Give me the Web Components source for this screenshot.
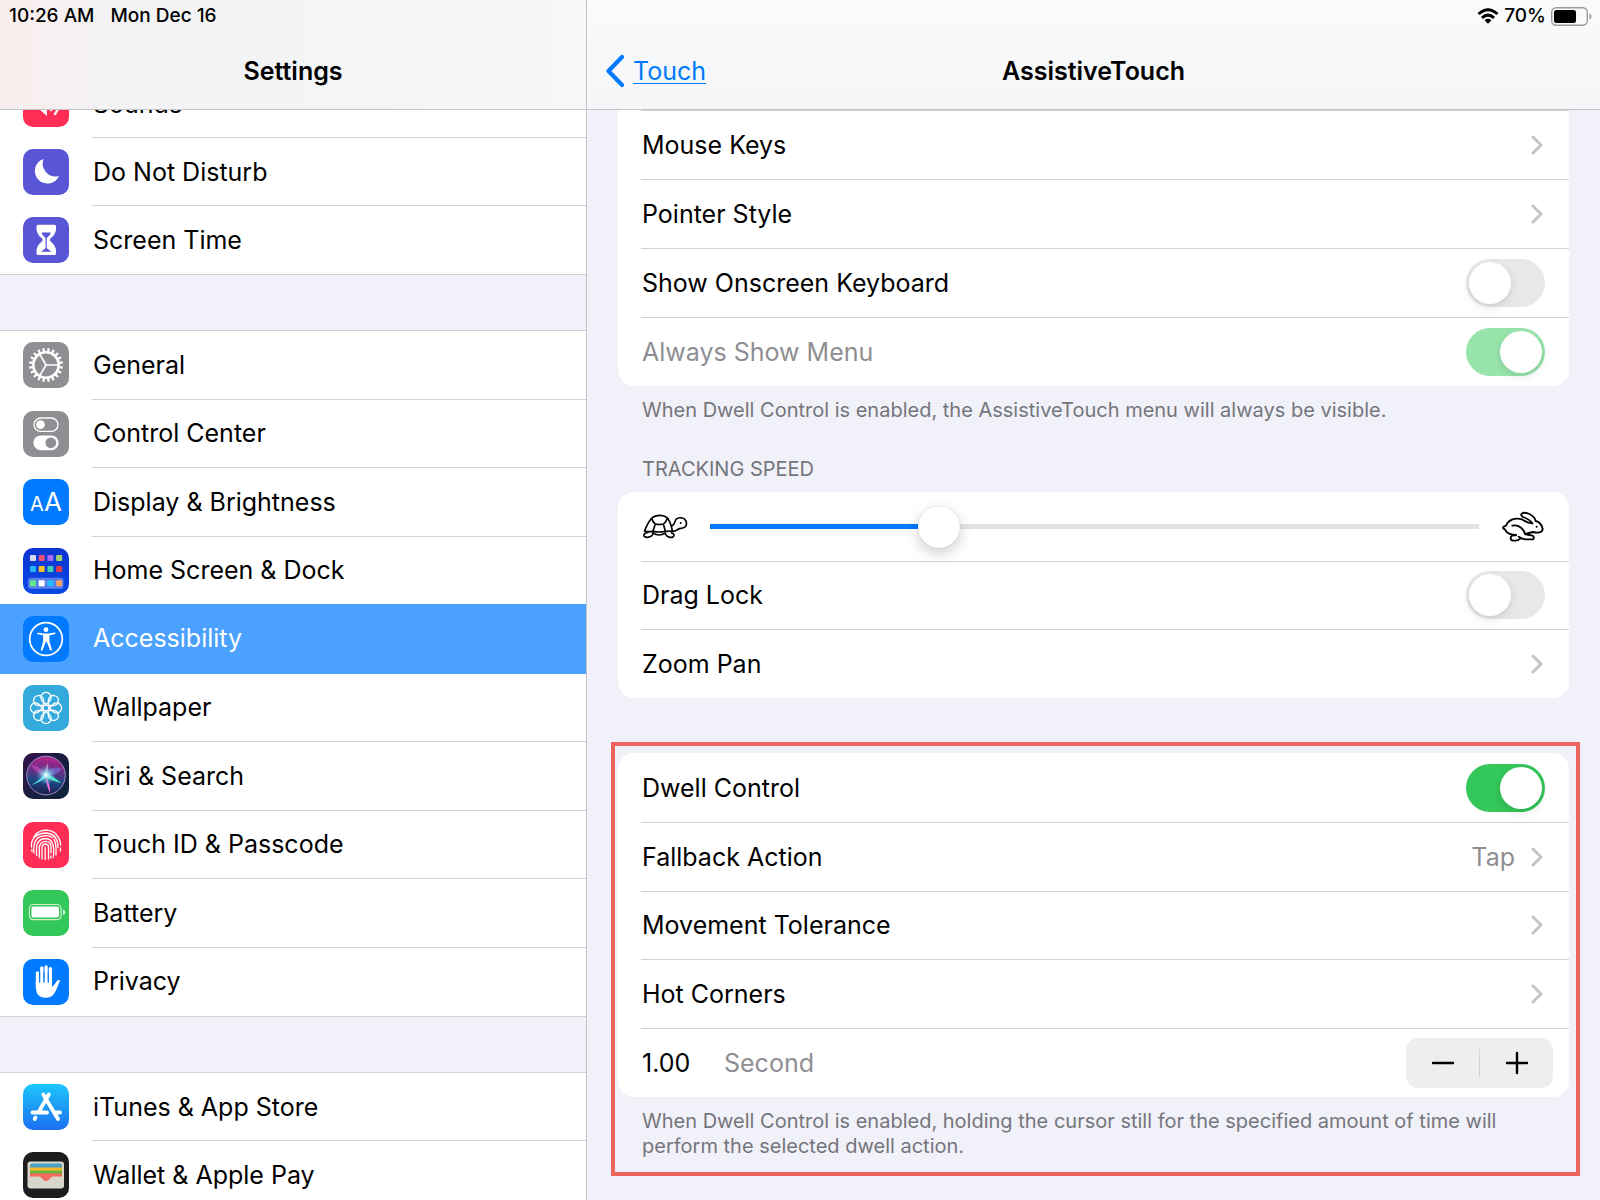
<!DOCTYPE html>
<html lang="en">
<head>
<meta charset="utf-8">
<meta name="viewport" content="width=device-width, initial-scale=1">
<title>Settings</title>
<style>
  :root {
    --line: #d1d1d5;
    --group-bg: #f1f1f9;
    --blue: #007aff;
    --gray: #8e8e93;
  }
  body {
    margin: 0;
    font-family: Inter, "Liberation Sans", sans-serif;
    font-size: 25px;
    line-height: 32px;
    color: #000;
  }
</style>
</head>
<body>
<split-view>
  <settings-pane slot="sidebar" side>
    <status-clock slot="status"></status-clock>
    <span slot="title">Settings</span>
    <side-group scrolled style="--group-height: 206px">
      <side-item icon="sounds">Sounds</side-item>
      <side-item icon="moon">Do Not Disturb</side-item>
      <side-item icon="hourglass">Screen Time</side-item>
    </side-group>
    <side-group style="--group-height: 687px">
      <side-item icon="gear">General</side-item>
      <side-item icon="controls">Control Center</side-item>
      <side-item icon="display">Display &amp; Brightness</side-item>
      <side-item icon="home">Home Screen &amp; Dock</side-item>
      <side-item icon="accessibility" selected>Accessibility</side-item>
      <side-item icon="wallpaper">Wallpaper</side-item>
      <side-item icon="siri">Siri &amp; Search</side-item>
      <side-item icon="touchid">Touch ID &amp; Passcode</side-item>
      <side-item icon="battery">Battery</side-item>
      <side-item icon="hand">Privacy</side-item>
    </side-group>
    <side-group style="--group-height: 138px">
      <side-item icon="appstore">iTunes &amp; App Store</side-item>
      <side-item icon="wallet">Wallet &amp; Apple Pay</side-item>
    </side-group>
  </settings-pane>

  <settings-pane>
    <status-power slot="status"></status-power>
    <back-link slot="back">Touch</back-link>
    <span slot="title">AssistiveTouch</span>
    <card-group continued style="--group-height: 276px">
      <link-row>Mouse Keys</link-row>
      <link-row>Pointer Style</link-row>
      <switch-row label="Show Onscreen Keyboard"></switch-row>
      <switch-row label="Always Show Menu" checked disabled></switch-row>
      <span slot="footer">When Dwell Control is enabled, the AssistiveTouch menu will always be visible.</span>
    </card-group>
    <card-group header="Tracking Speed" style="--group-height: 206px">
      <speed-row value="286"></speed-row>
      <switch-row label="Drag Lock"></switch-row>
      <link-row>Zoom Pan</link-row>
    </card-group>
    <marked-area>
      <card-group style="--group-height: 344px">
        <switch-row label="Dwell Control" checked></switch-row>
        <link-row value="Tap">Fallback Action</link-row>
        <link-row>Movement Tolerance</link-row>
        <link-row>Hot Corners</link-row>
        <stepper-row value="1.00" unit="Second"></stepper-row>
        <span slot="footer">When Dwell Control is enabled, holding the cursor still for the specified amount of time will perform the selected dwell action.</span>
      </card-group>
    </marked-area>
  </settings-pane>
</split-view>

<script>
const range = n => [...Array(n).keys()];

const squares = (y, colors) => colors.map((c, i) =>
  `<rect x="${7 + i * 8.7}" y="${y}" width="6" height="6" rx="1" fill="${c}"/>`).join('');

// Sidebar icons, each drawn on a 46 x 46 tile
const icons = {
  sounds: { bg: '#ff2d55', art: `
    <path d="M10 18h6l8-7v24l-8-7h-6z" fill="#fff"/>
    <path d="M28 17q4 6 0 12M32 13q7 10 0 20" fill="none" stroke="#fff" stroke-width="2.4" stroke-linecap="round"/>` },
  moon: { bg: '#5856d6', art: `
    <path d="M20.5 10A12.6 12.6 0 1 0 36 27A13 13 0 0 1 20.5 10Z" fill="#fff"/>` },
  hourglass: { bg: '#5856d6', art: `
    <path d="M15 7.7h16.500q1.500 0 1.500 1.600v3q0 1.600-1 3.700q-1.300 3-3.500 4.600q-1.700 1.300-1.700 2.300t1.700 2.300q2.200 1.600 3.500 4.600q1 2.100 1 3.700v2.900q0 1.600-1.500 1.600h-16.500q-1.500 0-1.500-1.600v-2.900q0-1.600 1-3.700q1.300-3 3.500-4.600q1.700-1.300 1.700-2.300t-1.700-2.300q-2.200-1.600-3.500-4.600q-1-2.100-1-3.700v-3q0-1.600 1.500-1.600z" fill="#fff"/>
    <path d="M18.600 15.400h9.200q-.8 3.200-3 4.700q-1 .7-1 1.700v9q0 .8 1.300 1.400q2.300 1 3.200 2.500h-10.200q.9-1.500 3.200-2.500q1.300-.6 1.300-1.400v-9q0-1-1-1.700q-2.200-1.500-3-4.700z" fill="#5856d6"/>` },
  gear: { bg: '#8e8e93', art: `
    <g fill="none" stroke="#fff">
      <circle cx="23" cy="23" r="12.700" stroke-width="2.600"/>
      <g stroke-width="2.200">${range(20).map(i => `<path d="M23 9.500V6" transform="rotate(${i * 18 + 9} 23 23)"/>`).join('')}</g>
      <path d="M23 23h12M23 23l-6-10.400M23 23l-6 10.400" stroke-width="1.700"/>
    </g>` },
  controls: { bg: '#8e8e93', art: `
    <rect x="11" y="7" width="24" height="13.400" rx="6.700" fill="none" stroke="#fff" stroke-width="1.300"/>
    <circle cx="17.500" cy="13.700" r="4.400" fill="#fff"/>
    <rect x="10.400" y="24.400" width="25.200" height="14.800" rx="7.400" fill="#fff"/>
    <circle cx="27.800" cy="31.800" r="5.400" fill="#8e8e93"/>` },
  display: { bg: '#007aff', art: `
    <g fill="#fff" font-family="Inter, sans-serif"><text x="7" y="32" font-size="20">A</text><text x="21" y="32" font-size="26">A</text></g>` },
  home: { bg: 'linear-gradient(#0b35cf, #0a48e4)', art: `
    ${squares(7, ['#d5dbf5', '#f0507a', '#a86cf5', '#9fd468'])}
    ${squares(18, ['#22b6f8', '#f5c02c', '#42cfae', '#e23c4c'])}
    <rect x="5" y="29.700" width="35.500" height="11" rx="2.500" fill="#fff" opacity=".32"/>
    ${squares(32.3, ['#5ee887', '#fff', '#22bdfa', '#f2a15f'])}` },
  accessibility: { bg: '#007aff', art: `
    <circle cx="23" cy="23" r="16.300" fill="none" stroke="#fff" stroke-width="1.800"/>
    <circle cx="23" cy="13.700" r="2.400" fill="#fff"/>
    <path d="M14.500 16.500l5.500 1h6l5.500-1q1 0 1 .8t-.8.900l-5.200 1.100v6l2.300 8.200q.2 1-.6 1.200t-1.200-.7l-3.200-8h-1l-3.200 8q-.4.900-1.200.7t-.6-1.200l2.300-8.200v-6l-5.200-1.100q-.8-.1-.8-.9t.9-.8z" fill="#fff"/>` },
  wallpaper: { bg: '#34aadc', art: `
    <g fill="none" stroke="#fff" stroke-width="1.400">
      ${range(8).map(i => `<path d="M23 19.500L19 15.500A5 5 0 1 1 27 15.500Z" transform="rotate(${i * 45} 23 23)"/>`).join('')}
      <circle cx="23" cy="23" r="3"/>
    </g>` },
  siri: { bg: 'linear-gradient(135deg, #35104c, #14203e 60%, #10243e)', art: `
    <defs>
      <linearGradient id="orb" x1=".5" y1="0" x2=".4" y2="1"><stop offset="0" stop-color="#b5258c"/><stop offset=".35" stop-color="#6d2b84"/><stop offset=".65" stop-color="#1c4a83"/><stop offset="1" stop-color="#1d1848"/></linearGradient>
      <radialGradient id="glow"><stop offset="0" stop-color="#fff"/><stop offset=".35" stop-color="#9de9fa" stop-opacity=".7"/><stop offset="1" stop-color="#45a5dc" stop-opacity="0"/></radialGradient>
    </defs>
    <circle cx="23" cy="22.500" r="19.300" fill="url(#orb)" stroke="#9e8cc0" stroke-width="1"/>
    <path d="M22 23Q12 20 8 12Q18 12 22 23Z" fill="#d44ec0" opacity=".6"/>
    <path d="M22 23Q28 11 39 16Q34 23 22 23Z" fill="#7979d8" opacity=".6"/>
    <path d="M22 22Q23 13 25 10Q25 18 24 23Z" fill="#f3abd8" opacity=".8"/>
    <path d="M23 20Q15 29 8 32Q16 30 23 24Z" fill="#55f0e4"/>
    <path d="M23 20Q33 25 38 30Q30 28 21 24Z" fill="#4ce5c9"/>
    <path d="M22 23Q28 31 27 40Q24 34 22 23Z" fill="#f16bd2"/>
    <circle cx="23" cy="22" r="10" fill="url(#glow)"/>` },
  touchid: { bg: '#ff2d55', art: `
    <g fill="none" stroke="#fff" stroke-width="1.300" stroke-linecap="round">
      <path d="M13 11.500Q23 4.500 33 11.500M10.500 15.500Q12 13 14 11.900M32.500 12Q37.500 16.500 37.600 23"/>
      <path d="M8.500 25Q8 21.500 9.500 18Q13.500 11 23 11Q35 12 35 25.500M8.800 27.500L9 29.500M37.500 26L37.300 29"/>
      <path d="M11 31Q10.500 28 10.900 25Q11.500 13.800 23 13.700Q27 13.700 29.500 15.800M31 17.500Q33.500 21 33 33"/>
      <path d="M13.700 33.500Q13.300 28 13.600 25Q14.500 16.500 23 16.500Q32 17.500 30.500 33.500M30.300 35V35.500"/>
      <path d="M16.300 35.500V25.500Q17 19.300 23 19.300Q28.500 20 28 25.500V31M27.900 34V36"/>
      <path d="M19 37V26Q19 22 22.500 22Q25.800 22.300 25.500 26V37M22.200 25V37.500"/>
    </g>` },
  battery: { bg: '#34c759', art: `
    <g opacity=".75"><rect x="6.400" y="14.500" width="31.700" height="15.200" rx="4" fill="none" stroke="#fff" stroke-width="1.200"/>
    <path d="M40 19.500q2.300.6 2.300 2.800t-2.300 2.800z" fill="#fff"/></g>
    <rect x="8.500" y="16.600" width="27.500" height="11" rx="2" fill="#fff"/>` },
  hand: { bg: '#007aff', art: `
    <path d="M14.500 28V13.800M18.800 25V8.900M23.100 25V8M27.400 25V9.600" stroke="#fff" stroke-width="3.300" stroke-linecap="round"/>
    <path d="M12.850 22.500H29V28Q32 25.500 33.500 22.500Q35 20.300 37.300 21.200Q36.500 22.500 34 29Q31.500 35 29 37Q26.500 39 22 38.700Q13 38.500 12.850 28.500Z" fill="#fff"/>
    <path d="M16.650 13V23.500M20.950 13V23.500M25.250 13V23.500" stroke="#007aff" stroke-width="1" stroke-linecap="round"/>` },
  appstore: { bg: 'linear-gradient(#1dc6fb, #1d70f2)', art: `
    <g stroke="#fff" stroke-width="3.800" stroke-linecap="round">
      <path d="M9.500 28.500H24M32 28.500H37M25.800 10.500L16 27.500M20.300 10.500L35 35M12.500 33.600L11.700 35"/>
    </g>` },
  wallet: { bg: '#1d1d1f', art: `
    <rect x="4.500" y="9.500" width="36.500" height="27" rx="3" fill="#d8d6cb"/>
    <path d="M7 17V13.500Q7 11.500 9 11.500H37Q39 11.500 39 13.500V17Z" fill="#4a9fc4"/>
    <path d="M7 15.500H39V20H7Z" fill="#f5b921"/>
    <path d="M7 18.500H39V23H7Z" fill="#6db33f"/>
    <path d="M7 21.500H39V24.500H30Q28 24.500 26.500 27Q25 29 23 29T19.500 27Q18 24.500 16 24.500H7Z" fill="#f2695c"/>` },
};

const chevron = `
  <svg class="chevron" width="12" height="20" viewBox="0 0 12 20" aria-hidden="true">
    <path d="M2 2l8 8-8 8" fill="none" stroke="#c4c4c7" stroke-width="3" stroke-linecap="round" stroke-linejoin="round"/>
  </svg>`;

// Box shared by every row of a card
const rowStyles = `
  :host { display: flex; padding-left: 23px; }
  .row {
    flex: 1;
    display: flex;
    align-items: center;
    box-sizing: border-box;
    min-width: 0;
    padding-left: 1px;
    padding-right: 24px;
    border-top: 1px solid var(--line);
    color: inherit;
    text-decoration: none;
  }
  :host(:first-child) .row { border-top-color: var(--first-line, transparent); }
  .label { flex: 1; }
`;

function define(name, render, setup) {
  customElements.define(name, class extends HTMLElement {
    constructor() {
      super();
      this.attachShadow({ mode: 'open' });
    }
    connectedCallback() {
      this.shadowRoot.innerHTML = render(this);
      if (setup) setup(this.shadowRoot, this);
    }
  });
}

define('split-view', () => `
  <style>
    :host {
      display: grid;
      grid-template-columns: minmax(0, 586fr) minmax(0, 1014fr);
      height: 100vh;
      overflow: hidden;
    }
  </style>
  <slot name="sidebar"></slot>
  <slot></slot>
`);

define('settings-pane', () => `
  <style>
    :host {
      display: flex;
      flex-direction: column;
      min-height: 0;
      background: var(--group-bg);
      border-left: 1px solid #c3c3c8;
    }
    :host([side]) { border-left: none; }
    header {
      flex: none;
      display: flex;
      flex-direction: column;
      background: linear-gradient(#f9fafc, #f5f6f8);
      border-bottom: 1px solid #c3c3c8;
    }
    :host([side]) header {
      background: linear-gradient(90deg, #faeded, #f6f0f1 10%, #f3f3f5 22%, #f3f4f6 50%, #f6f7f9);
    }
    .status { height: 32px; display: flex; }
    nav {
      display: grid;
      grid-template-columns: 1fr auto 1fr;
      align-items: center;
      height: 77px;
      padding: 0 19px;
    }
    h1 { margin: 0; grid-column: 2; font-size: 25px; line-height: 32px; font-weight: 600; }
    main {
      flex: 1;
      display: flex;
      flex-direction: column;
      min-height: 0;
      overflow: hidden;
      padding: 0 31px;
    }
    :host([side]) main { padding: 0; gap: 55px; }
  </style>
  <header>
    <div class="status"><slot name="status"></slot></div>
    <nav><slot name="back"></slot><h1><slot name="title"></slot></h1></nav>
  </header>
  <main><slot></slot></main>
`);

define('status-clock', () => `
  <style>
    :host { display: flex; align-items: center; gap: 16px; padding-left: 9px; font-size: 19px; font-weight: 500; line-height: 24px; }
  </style>
  <span>10:26 AM</span><span>Mon Dec 16</span>
`);

define('status-power', () => `
  <style>
    :host { flex: 1; display: flex; align-items: center; justify-content: flex-end; gap: 5px; padding-right: 8px; font-size: 19px; font-weight: 500; line-height: 24px; }
    svg { display: block; }
  </style>
  <svg width="22" height="16" viewBox="0 0 22 16" aria-label="Wi-Fi">
    <g fill="none" stroke="#000" stroke-width="3">
      <path d="M1.500 6Q11-2.500 20.500 6"/>
      <path d="M5 9.800Q11 4.500 17 9.800"/>
    </g>
    <path d="M7.500 12.200Q11 9.300 14.500 12.200L11 15.800Z"/>
  </svg>
  <span>70%</span>
  <svg width="41" height="19" viewBox="0 0 41 19" aria-label="Battery">
    <rect x=".7" y=".7" width="35.600" height="17.600" rx="4.500" fill="none" stroke="#9b9c9e" stroke-width="1.400"/>
    <rect x="3" y="3" width="22" height="13" rx="2.500"/>
    <path d="M38.500 6.500q2 .7 2 3t-2 3z" fill="#9b9c9e"/>
  </svg>
`);

define('back-link', () => `
  <style>
    :host { display: flex; }
    a { display: flex; align-items: center; gap: 9px; color: var(--blue); text-decoration: none; }
    span { text-decoration: underline; text-decoration-thickness: 1px; text-underline-offset: 3px; }
  </style>
  <a href="#touch">
    <svg width="18" height="34" viewBox="0 0 18 34" aria-hidden="true">
      <path d="M16 3L2.500 17L16 31" fill="none" stroke="currentColor" stroke-width="4.200" stroke-linecap="round" stroke-linejoin="round"/>
    </svg>
    <span><slot></slot></span>
  </a>
`);

define('side-group', () => `
  <style>
    :host {
      flex: none;
      display: grid;
      grid-auto-rows: 1fr;
      box-sizing: border-box;
      min-height: var(--group-height);
      background: #fff;
      border-top: 1px solid var(--line);
      border-bottom: 1px solid var(--line);
    }
    /* the list is scrolled, its first row lies partly under the header */
    :host([scrolled]) { margin-top: -41px; }
  </style>
  <slot></slot>
`);

define('side-item', el => `
  <style>
    :host { display: flex; }
    /* covers the separator of the row above */
    :host([selected]) { margin-top: -1px; }
    a {
      flex: 1;
      display: flex;
      align-items: center;
      padding-left: 23px;
      gap: 23px;
      color: inherit;
      text-decoration: none;
    }
    :host([selected]) a { background: #4aa1ff; color: #fff; }
    .tile { flex: none; width: 46px; height: 46px; border-radius: 10px; background: ${icons[el.getAttribute('icon')].bg}; }
    svg { display: block; }
    .label {
      flex: 1;
      display: flex;
      align-items: center;
      align-self: stretch;
      padding-left: 1px;
      border-bottom: 1px solid var(--line);
    }
    :host(:last-child) .label, :host([selected]) .label { border-bottom-color: transparent; }
  </style>
  <a href="#${el.getAttribute('icon')}">
    <span class="tile"><svg width="46" height="46" viewBox="0 0 46 46" aria-hidden="true">${icons[el.getAttribute('icon')].art}</svg></span>
    <span class="label"><slot></slot></span>
  </a>
`);

define('card-group', el => `
  <style>
    :host { display: block; }
    .card {
      display: grid;
      grid-auto-rows: 1fr;
      min-height: var(--group-height);
      background: #fff;
      border-radius: 16px;
    }
    :host([continued]) { --first-line: var(--line); }
    :host([continued]) .card { border-radius: 0 0 16px 16px; }
    .note {
      padding: 0 24px;
      font-size: 20px;
      line-height: 25px;
      color: #75757c;
    }
    .header { padding-top: 34px; padding-bottom: 10px; text-transform: uppercase; }
    .footer { padding-top: 12px; }
  </style>
  ${el.hasAttribute('header') ? `<div class="note header">${el.getAttribute('header')}</div>` : ''}
  <div class="card"><slot></slot></div>
  ${el.querySelector('[slot=footer]') ? '<div class="note footer"><slot name="footer"></slot></div>' : ''}
`);

define('link-row', el => `
  <style>
    ${rowStyles}
    .row { padding-right: 26px; gap: 16px; }
    .value { color: var(--gray); }
  </style>
  <a class="row" href="#">
    <span class="label"><slot></slot></span>
    ${el.hasAttribute('value') ? `<span class="value">${el.getAttribute('value')}</span>` : ''}
    ${chevron}
  </a>
`);

define('switch-row', el => `
  <style>
    ${rowStyles}
    input {
      appearance: none;
      flex: none;
      display: flex;
      box-sizing: border-box;
      width: 79px;
      height: 48px;
      margin: 0;
      padding: 3px;
      border-radius: 24px;
      background: #e7e8ea;
    }
    input::before {
      content: "";
      width: 42px;
      height: 42px;
      border-radius: 50%;
      background: #fff;
      box-shadow: 0 3px 8px rgba(0, 0, 0, .12);
    }
    input:checked { background: #34c759; justify-content: flex-end; }
    input:disabled { background: #98e5ab; }
    :host([disabled]) .label { color: var(--gray); }
  </style>
  <div class="row">
    <label class="label" for="switch">${el.getAttribute('label')}</label>
    <input id="switch" type="checkbox" role="switch" ${el.hasAttribute('checked') ? 'checked' : ''} ${el.hasAttribute('disabled') ? 'disabled' : ''}>
  </div>
`);

define('speed-row', el => `
  <style>
    ${rowStyles}
    .row { gap: 22px; }
    svg { flex: none; }
    input {
      --thumb: 42px;
      appearance: none;
      flex: 1;
      min-width: 0;
      height: 42px;
      margin: 0;
      background: linear-gradient(90deg, var(--blue) var(--fill), #e4e4e6 var(--fill)) center / 100% 5px no-repeat;
    }
    input::-webkit-slider-thumb {
      appearance: none;
      width: var(--thumb);
      height: var(--thumb);
      border-radius: 50%;
      background: #fff;
      box-shadow: 0 0 1px rgba(0, 0, 0, .2), 0 5px 14px rgba(0, 0, 0, .2);
    }
  </style>
  <div class="row">
    <svg width="46" height="27" viewBox="98 100 138 81" aria-hidden="true">
      <g fill="none" stroke="#000" stroke-width="5" stroke-linecap="round" stroke-linejoin="round">
        <path d="M106 153C112 140 118 122 130 113C143 105 162 105 173 114C181 122 186 138 189 153"/>
        <path d="M127 117Q132 130 138 133Q150 136 162 133Q168 130 174 117M138 133L131 154M162 133L168 154"/>
        <path d="M106 154Q118 157 131 155Q150 159 168 155L190 154M131 161Q149 171 168 161"/>
        <path d="M130 161Q132 170 114 173Q102 173 104 165Q106 159 116 158M168 161Q170 170 182 173Q194 174 194 166Q193 161 186 159"/>
        <path d="M187 139Q195 135 197 126C200 111 222 111 229 122C235 135 229 146 215 146C205 146 203 155 190 155"/>
      </g>
      <circle cx="214" cy="130" r="3"/>
    </svg>
    <input type="range" min="0" max="1000" value="${el.getAttribute('value')}" aria-label="Tracking speed">
    <svg width="44" height="32" viewBox="362 94 132 96" aria-hidden="true">
      <g fill="none" stroke="#000" stroke-width="5.500" stroke-linecap="round" stroke-linejoin="round">
        <path d="M456 131Q440 130 425 119C402 113 384 121 377 138Q366 142 369 146Q376 149 377 155Q385 164 407 166"/>
        <path d="M456 131Q450 120 428 112Q420 107 424 102C436 94 463 107 466 124Q482 127 487 147C487 161 470 160 458 157Q450 159 436 163"/>
        <path d="M396 138C416 133 431 150 434 163Q447 166 457 168Q464 173 458 179H434Q423 177 415 171"/>
        <path d="M407 167Q391 165 391 176Q392 184 405 183Q415 182 420 177"/>
      </g>
      <circle cx="469" cy="141" r="3"/>
    </svg>
  </div>
`, root => {
  const input = root.querySelector('input');
  const update = () => input.style.setProperty('--fill', `${input.value / 10}%`);
  input.addEventListener('input', update);
  update();
});

define('stepper-row', el => `
  <style>
    ${rowStyles}
    .row { padding-right: 16px; }
    input {
      width: 82px;
      box-sizing: border-box;
      padding: 0;
      border: none;
      background: none;
      font: inherit;
      color: inherit;
    }
    .label { color: var(--gray); }
    .stepper {
      display: flex;
      align-items: center;
      height: 50px;
      border-radius: 12px;
      background: #edeef0;
    }
    button {
      display: grid;
      place-items: center;
      width: 73px;
      height: 50px;
      padding: 0;
      border: none;
      background: none;
      color: inherit;
    }
    .divider { width: 1px; height: 28px; background: #d3d4d8; }
  </style>
  <div class="row">
    <input id="amount" type="text" inputmode="decimal" value="${el.getAttribute('value')}">
    <label class="label" for="amount">${el.getAttribute('unit')}</label>
    <div class="stepper">
      <button type="button" data-step="-0.05" aria-label="Decrease">
        <svg width="24" height="24" viewBox="0 0 24 24"><path d="M2 12h20" stroke="currentColor" stroke-width="2.400" stroke-linecap="round"/></svg>
      </button>
      <span class="divider"></span>
      <button type="button" data-step="0.05" aria-label="Increase">
        <svg width="24" height="24" viewBox="0 0 24 24"><path d="M2 12h20M12 2v20" stroke="currentColor" stroke-width="2.400" stroke-linecap="round"/></svg>
      </button>
    </div>
  </div>
`, root => {
  const input = root.querySelector('input');
  root.querySelectorAll('button').forEach(button => {
    button.addEventListener('click', () => {
      const next = Number(input.value) + Number(button.dataset.step);
      input.value = Math.max(0, next).toFixed(2);
    });
  });
});

define('marked-area', () => `
  <style>
    :host {
      display: block;
      margin: 44px -11px 0 -7px;
      padding: 7px 7px 13px 3px;
      border: 4px solid #ec655c;
    }
  </style>
  <slot></slot>
`);
</script>
</body>
</html>
